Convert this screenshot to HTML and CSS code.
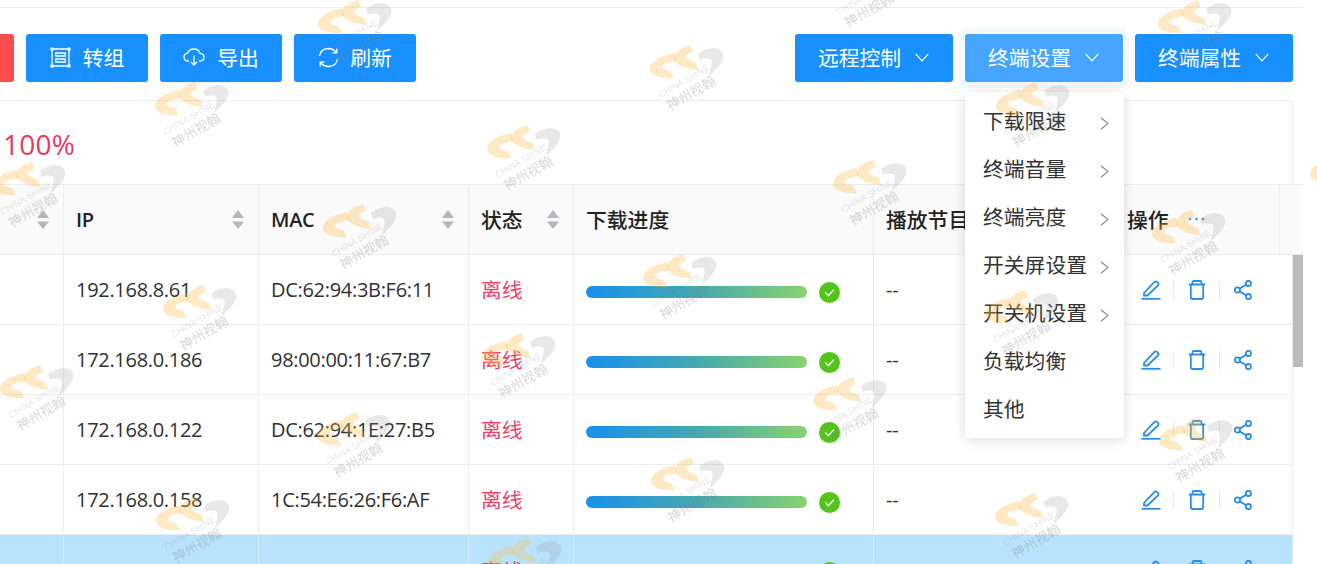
FILE: index.html
```html
<!DOCTYPE html>
<html lang="zh-CN">
<head>
<meta charset="utf-8">
<title>终端管理</title>
<link rel="stylesheet" href="styles.css">
</head>
<body>
<svg class="defs" width="0" height="0" aria-hidden="true">
  <defs>
    <symbol id="logo" viewBox="0 0 75 40">
      <path class="lg-o" d="M24 8C10 11 -1 17 0 25C1 31 13 34 24 33L20 26C15 25 12 24 12 22C12 19 19 17 26 16Z"/>
      <path class="lg-o" d="M40 0C31 2 23 8 24 14C25 20 37 24 48 25L46 18C41 16 36 14 36 12C36 10 39 8 43 7Z"/>
      <path class="lg-g" d="M48 9C56 3 65 1 70 5C77 10 73 19 59 31C60 24 63 18 61 15C59 13 54 13 50 15Z"/>
    </symbol>
    <symbol id="ic-edit" viewBox="0 0 20 20">
      <path d="M3 13.500L13.500 2.500Q14.700 1.400 16 2.400L17 3.400Q18 4.600 17 5.800L6.500 16H3Z" transform="translate(0 -.5)"/>
      <path d="M.5 18.800H19.500"/>
    </symbol>
    <symbol id="ic-trash" viewBox="0 0 18 20">
      <path d="M.8 4.500H17.200M4.500 4.500V2.400Q4.500 1 5.900 1H12.100Q13.500 1 13.500 2.400V4.500M2.800 4.500V17Q2.800 19 4.800 19H13.200Q15.200 19 15.200 17V4.500"/>
    </symbol>
    <symbol id="ic-share" viewBox="0 0 18 20">
      <circle cx="3.400" cy="10" r="2.600"/><circle cx="14.400" cy="3.400" r="2.600"/><circle cx="14.400" cy="16.600" r="2.600"/>
      <path d="M5.600 8.600L12.200 4.800M5.600 11.400L12.200 15.200"/>
    </symbol>
    <symbol id="ic-check" viewBox="0 0 21 21">
      <circle class="chk-bg" cx="10.500" cy="10.500" r="10.500"/>
      <path class="chk-mark" d="M6.300 10.600L9.400 13.700L14.800 7.600"/>
    </symbol>
    <symbol id="ic-down" viewBox="0 0 14 9"><path d="M.7 .8L7 7.800L13.300 .8"/></symbol>
    <symbol id="ic-right" viewBox="0 0 9 13"><path d="M1 .8L8 6.500L1 12.200"/></symbol>
    <symbol id="ic-caret" viewBox="0 0 12 19"><path d="M6 0L12 8H0Z"/><path d="M0 11.500H12L6 19Z"/></symbol>
  </defs>
</svg>

<div class="page">
  <div class="topline"></div>

  <div class="toolbar">
    <div class="btn-group">
      <button class="btn btn-red" aria-label="删除"></button>
      <button class="btn btn-wide">
        <svg class="btn-ic" width="21" height="21" viewBox="0 0 21 21"><path d="M2 2H19V19H2Z"/><path class="ic-dots" d="M.5 .5H3.500V3.500H.5ZM17.500 .5H20.500V3.500H17.500ZM.5 17.500H3.500V20.500H.5ZM17.500 17.500H20.500V20.500H17.500Z"/><path d="M5.800 6H15.200V9H5.800ZM5.800 12H15.200V15H5.800Z"/></svg>
        <span class="gap-l">转组</span>
      </button>
      <button class="btn btn-wide">
        <svg class="btn-ic" width="22" height="18" viewBox="0 0 22 18"><path d="M6 13H5Q1 13 1 9Q1 5.600 4.500 5.300Q6 1 11 1Q15.800 1 17 5.300Q21 5.800 21 9Q21 13 17 13H16M11 7.500V16.500M8 14L11 17L14 14"/></svg>
        <span class="gap-m">导出</span>
      </button>
      <button class="btn btn-wide">
        <svg class="btn-ic" width="21" height="21" viewBox="0 0 21 21"><path d="M1.500 9Q2.500 2 10 1.500Q15.500 1.500 18.500 5.500M19.500 12Q18.500 19 11 19.500Q5.500 19.500 2.500 15.500M18.800 1.500V5.800H14.500M2.200 19.500V15.200H6.500"/></svg>
        <span class="gap-s">刷新</span>
      </button>
    </div>
    <div class="btn-group">
      <button class="btn btn-drop"><span>远程控制</span><svg class="ic-down"><use href="#ic-down"/></svg></button>
      <button class="btn btn-drop is-active"><span>终端设置</span><svg class="ic-down"><use href="#ic-down"/></svg></button>
      <button class="btn btn-drop"><span>终端属性</span><svg class="ic-down"><use href="#ic-down"/></svg></button>
    </div>
  </div>

  <div class="card"><span class="percent">100%</span></div>

  <div class="thead">
    <div class="c c1 th"><svg class="caret"><use href="#ic-caret"/></svg></div>
    <div class="c c2 th"><span>IP</span><svg class="caret"><use href="#ic-caret"/></svg></div>
    <div class="c c3 th"><span>MAC</span><svg class="caret"><use href="#ic-caret"/></svg></div>
    <div class="c c4 th"><span class="zh">状态</span><svg class="caret"><use href="#ic-caret"/></svg></div>
    <div class="c c5 th"><span class="zh">下载进度</span></div>
    <div class="c c6 th"><span class="zh">播放节目单</span></div>
    <div class="c c7h th"><span class="zh">操作</span><svg class="more" width="17" height="4" viewBox="0 0 17 4"><circle cx="2" cy="2" r="1.300"/><circle cx="8.500" cy="2" r="1.300"/><circle cx="15" cy="2" r="1.300"/></svg></div>
    <div class="gutter"></div>
  </div>

  <div class="tbody-wrap">
    <div class="tbody">
      <div class="tr">
        <div class="c c1"></div>
        <div class="c c2">192.168.8.61</div>
        <div class="c c3">DC:62:94:3B:F6:11</div>
        <div class="c c4 zh status">离线</div>
        <div class="c c5"><div class="bar"></div><svg class="check"><use href="#ic-check"/></svg></div>
        <div class="c c6">--</div>
        <div class="c c7 ops"><svg class="op op-edit"><use href="#ic-edit"/></svg><i class="sep"></i><svg class="op op-trash"><use href="#ic-trash"/></svg><i class="sep"></i><svg class="op op-share"><use href="#ic-share"/></svg></div>
      </div>
      <div class="tr">
        <div class="c c1"></div>
        <div class="c c2">172.168.0.186</div>
        <div class="c c3">98:00:00:11:67:B7</div>
        <div class="c c4 zh status">离线</div>
        <div class="c c5"><div class="bar"></div><svg class="check"><use href="#ic-check"/></svg></div>
        <div class="c c6">--</div>
        <div class="c c7 ops"><svg class="op op-edit"><use href="#ic-edit"/></svg><i class="sep"></i><svg class="op op-trash"><use href="#ic-trash"/></svg><i class="sep"></i><svg class="op op-share"><use href="#ic-share"/></svg></div>
      </div>
      <div class="tr">
        <div class="c c1"></div>
        <div class="c c2">172.168.0.122</div>
        <div class="c c3">DC:62:94:1E:27:B5</div>
        <div class="c c4 zh status">离线</div>
        <div class="c c5"><div class="bar"></div><svg class="check"><use href="#ic-check"/></svg></div>
        <div class="c c6">--</div>
        <div class="c c7 ops"><svg class="op op-edit"><use href="#ic-edit"/></svg><i class="sep"></i><svg class="op op-trash"><use href="#ic-trash"/></svg><i class="sep"></i><svg class="op op-share"><use href="#ic-share"/></svg></div>
      </div>
      <div class="tr">
        <div class="c c1"></div>
        <div class="c c2">172.168.0.158</div>
        <div class="c c3">1C:54:E6:26:F6:AF</div>
        <div class="c c4 zh status">离线</div>
        <div class="c c5"><div class="bar"></div><svg class="check"><use href="#ic-check"/></svg></div>
        <div class="c c6">--</div>
        <div class="c c7 ops"><svg class="op op-edit"><use href="#ic-edit"/></svg><i class="sep"></i><svg class="op op-trash"><use href="#ic-trash"/></svg><i class="sep"></i><svg class="op op-share"><use href="#ic-share"/></svg></div>
      </div>
      <div class="tr is-selected">
        <div class="c c1"></div>
        <div class="c c2">10.101.84.54</div>
        <div class="c c3">AC:51:50:36:57:0E</div>
        <div class="c c4 zh status">离线</div>
        <div class="c c5"><div class="bar"></div><svg class="check"><use href="#ic-check"/></svg></div>
        <div class="c c6"></div>
        <div class="c c7 ops"><svg class="op op-edit"><use href="#ic-edit"/></svg><i class="sep"></i><svg class="op op-trash"><use href="#ic-trash"/></svg><i class="sep"></i><svg class="op op-share"><use href="#ic-share"/></svg></div>
      </div>
    </div>
    <div class="scrollbar"><div class="thumb"></div></div>
  </div>
</div>

<ul class="menu zh">
  <li>下载限速<svg class="ic-right"><use href="#ic-right"/></svg></li>
  <li>终端音量<svg class="ic-right"><use href="#ic-right"/></svg></li>
  <li>终端亮度<svg class="ic-right"><use href="#ic-right"/></svg></li>
  <li>开关屏设置<svg class="ic-right"><use href="#ic-right"/></svg></li>
  <li>开关机设置<svg class="ic-right"><use href="#ic-right"/></svg></li>
  <li>负载均衡</li>
  <li>其他</li>
</ul>

<div class="wms">
  <div class="wm w1"><svg class="wm-logo"><use href="#logo"/></svg><div class="wm-t"><span class="en">CHINA SHINE</span><span class="cn">神州视翰</span></div></div>
  <div class="wm w2"><svg class="wm-logo"><use href="#logo"/></svg><div class="wm-t"><span class="en">CHINA SHINE</span><span class="cn">神州视翰</span></div></div>
  <div class="wm w3"><svg class="wm-logo"><use href="#logo"/></svg><div class="wm-t"><span class="en">CHINA SHINE</span><span class="cn">神州视翰</span></div></div>
  <div class="wm w4"><svg class="wm-logo"><use href="#logo"/></svg><div class="wm-t"><span class="en">CHINA SHINE</span><span class="cn">神州视翰</span></div></div>
  <div class="wm w5"><svg class="wm-logo"><use href="#logo"/></svg><div class="wm-t"><span class="en">CHINA SHINE</span><span class="cn">神州视翰</span></div></div>
  <div class="wm w6"><svg class="wm-logo"><use href="#logo"/></svg><div class="wm-t"><span class="en">CHINA SHINE</span><span class="cn">神州视翰</span></div></div>
  <div class="wm w7"><svg class="wm-logo"><use href="#logo"/></svg><div class="wm-t"><span class="en">CHINA SHINE</span><span class="cn">神州视翰</span></div></div>
  <div class="wm w8"><svg class="wm-logo"><use href="#logo"/></svg><div class="wm-t"><span class="en">CHINA SHINE</span><span class="cn">神州视翰</span></div></div>
  <div class="wm w9"><svg class="wm-logo"><use href="#logo"/></svg><div class="wm-t"><span class="en">CHINA SHINE</span><span class="cn">神州视翰</span></div></div>
  <div class="wm w10"><svg class="wm-logo"><use href="#logo"/></svg><div class="wm-t"><span class="en">CHINA SHINE</span><span class="cn">神州视翰</span></div></div>
  <div class="wm w11"><svg class="wm-logo"><use href="#logo"/></svg><div class="wm-t"><span class="en">CHINA SHINE</span><span class="cn">神州视翰</span></div></div>
  <div class="wm w12"><svg class="wm-logo"><use href="#logo"/></svg><div class="wm-t"><span class="en">CHINA SHINE</span><span class="cn">神州视翰</span></div></div>
  <div class="wm w13"><svg class="wm-logo"><use href="#logo"/></svg><div class="wm-t"><span class="en">CHINA SHINE</span><span class="cn">神州视翰</span></div></div>
  <div class="wm w14"><svg class="wm-logo"><use href="#logo"/></svg><div class="wm-t"><span class="en">CHINA SHINE</span><span class="cn">神州视翰</span></div></div>
  <div class="wm w15"><svg class="wm-logo"><use href="#logo"/></svg><div class="wm-t"><span class="en">CHINA SHINE</span><span class="cn">神州视翰</span></div></div>
  <div class="wm w16"><svg class="wm-logo"><use href="#logo"/></svg><div class="wm-t"><span class="en">CHINA SHINE</span><span class="cn">神州视翰</span></div></div>
  <div class="wm w17"><svg class="wm-logo"><use href="#logo"/></svg><div class="wm-t"><span class="en">CHINA SHINE</span><span class="cn">神州视翰</span></div></div>
  <div class="wm w18"><svg class="wm-logo"><use href="#logo"/></svg><div class="wm-t"><span class="en">CHINA SHINE</span><span class="cn">神州视翰</span></div></div>
  <div class="wm w19"><svg class="wm-logo"><use href="#logo"/></svg><div class="wm-t"><span class="en">CHINA SHINE</span><span class="cn">神州视翰</span></div></div>
  <div class="wm w20"><svg class="wm-logo"><use href="#logo"/></svg><div class="wm-t"><span class="en">CHINA SHINE</span><span class="cn">神州视翰</span></div></div>
  <div class="wm w21"><svg class="wm-logo"><use href="#logo"/></svg><div class="wm-t"><span class="en">CHINA SHINE</span><span class="cn">神州视翰</span></div></div>
  <div class="wm w22"><svg class="wm-logo"><use href="#logo"/></svg><div class="wm-t"><span class="en">CHINA SHINE</span><span class="cn">神州视翰</span></div></div>
  <div class="wm w23"><svg class="wm-logo"><use href="#logo"/></svg><div class="wm-t"><span class="en">CHINA SHINE</span><span class="cn">神州视翰</span></div></div>
  <div class="wm w24"><svg class="wm-logo"><use href="#logo"/></svg><div class="wm-t"><span class="en">CHINA SHINE</span><span class="cn">神州视翰</span></div></div>
</div>
</body>
</html>
```
FILE: styles.css
```css
* { box-sizing: border-box; }
html, body { margin: 0; padding: 0; background: #fff; }
body {
  position: relative;
  width: 1317px;
  height: 564px;
  overflow: hidden;
  font-family: "Open Sans", "Noto Sans CJK SC", sans-serif;
  font-size: 20px;
  letter-spacing: -.3px;
  color: #303133;
}
.defs { position: absolute; }
.zh { font-family: "Noto Sans CJK SC", sans-serif; font-size: 20.800px; letter-spacing: 0; }

.page { width: 1303px; }
.topline { height: 8px; border-bottom: 1px solid #ededed; }

/* toolbar */
.toolbar {
  height: 92px;
  padding: 26px 10px 0 0;
  display: flex;
  justify-content: space-between;
  align-items: flex-start;
}
.btn-group { display: flex; gap: 12px; }
.btn {
  height: 48px;
  border: 0;
  padding: 0 0 2px;
  border-radius: 3px;
  background: #1890ff;
  color: #fff;
  font-family: "Noto Sans CJK SC", sans-serif;
  font-size: 20.800px;
  letter-spacing: 0;
  display: flex;
  align-items: center;
  justify-content: center;
  box-shadow: 0 2px 3px rgba(0, 0, 0, .05);
}
.btn-red { width: 14px; background: #ff4d4f; border-radius: 0 3px 3px 0; }
.btn-wide { width: 122px; }
.btn-drop { width: 158px; padding-right: 1px; }
.btn.is-active { background: #45a5ff; box-shadow: 0 0 0 6px rgba(24, 144, 255, .06); }
.btn-ic { fill: none; stroke: #fff; stroke-width: 1.300; flex: none; }
.ic-dots { fill: #fff; stroke: none; }
.gap-l { margin-left: 12px; }
.gap-m { margin-left: 12px; }
.gap-s { margin-left: 11px; }
.ic-down { width: 14px; height: 9px; margin-left: 14px; fill: none; stroke: #fff; stroke-width: 1.200; }

/* card title */
.card {
  width: 1293px;
  height: 84px;
  border: 1px solid #ededed;
  border-left: 0;
  border-bottom: 0;
  border-top-right-radius: 4px;
  display: flex;
  align-items: center;
  padding: 2px 0 0 3px;
}
.percent { font-size: 28px; line-height: 1; letter-spacing: .2px; color: #e8395f; }

/* table */
.thead {
  display: flex;
  height: 71px;
  background: #fafafa;
  border-top: 1px solid #ededed;
  border-bottom: 1px solid #ededed;
  color: #222;
}
.tr { display: flex; height: 70px; border-bottom: 1px solid #ededed; background: #fff; flex: none; }
.c {
  display: flex;
  align-items: center;
  padding: 0 14px 0 12px;
  border-right: 1px solid #ededed;
  flex: none;
  white-space: nowrap;
  overflow: hidden;
}
.c1 { width: 64px; }
.c2 { width: 195px; }
.c3 { width: 210px; }
.c4 { width: 105px; }
.c5 { width: 300px; padding-top: 5px; }
.c6 { width: 240px; }
.c7 { width: 179px; }
.c7h { width: 166px; }
.tr .c6 { border-right-color: transparent; }
.gutter { flex: 1; }
.th { justify-content: space-between; font-weight: 600; padding-bottom: 1px; }
.th .zh { font-weight: 500; }
.c5.th { padding-top: 0; }
.c7h { justify-content: flex-start; padding-left: 13px; }
.caret { width: 12px; height: 19px; fill: #b4b6b9; flex: none; margin-left: auto; }
.more { fill: #3d97ea; margin-left: 19px; flex: none; }

.tbody-wrap { display: flex; height: 310px; overflow: hidden; }
.tbody { width: 1293px; flex: none; }
.status { color: #e8416c; padding-bottom: 1px; }
.bar {
  width: 221px;
  height: 12px;
  border-radius: 6px;
  background: linear-gradient(90deg, #1890ee 0%, #45a8b0 50%, #88d26e 100%);
  flex: none;
}
.check { width: 21px; height: 21px; margin-left: 12px; flex: none; }
.chk-bg { fill: #52c41a; }
.chk-mark { fill: none; stroke: #fff; stroke-width: 1.400; }
.ops { padding-left: 27px; }
.op { fill: none; stroke: #2b8de6; stroke-width: 1.800; flex: none; }
.op-edit { width: 20px; height: 20px; }
.op-trash { width: 20px; height: 20px; }
.op-share { width: 18px; height: 20px; margin-left: 1px; }
.sep { width: 1px; height: 18px; background: #e8e8e8; margin: 0 13px 0 12px; flex: none; }
.tr.is-selected { background: #b9e3fd; border-bottom: 0; }
.is-selected .c { border-right-color: #d6effe; }
.tr.is-selected .c6 { border-right-color: transparent; }
.scrollbar { width: 10px; flex: none; }
.thumb { width: 10px; height: 112px; background: #bbb; }

/* dropdown */
.menu {
  position: absolute;
  left: 965px;
  top: 92px;
  width: 159px;
  height: 346px;
  margin: 0;
  padding: 6px 0 0;
  list-style: none;
  background: #fff;
  border-radius: 4px;
  box-shadow: 0 2px 14px rgba(0, 0, 0, .14);
  color: #333;
}
.menu li {
  height: 48px;
  padding: 0 0 4px 18px;
  display: flex;
  align-items: center;
  white-space: nowrap;
  position: relative;
}
.ic-right {
  position: absolute;
  left: 135px;
  top: 19px;
  width: 9px;
  height: 13px;
  fill: none;
  stroke: #888;
  stroke-width: 1.100;
}

/* watermark overlay */
.wms { position: absolute; inset: 0; pointer-events: none; overflow: hidden; }
.wm { position: absolute; width: 75px; height: 70px; }
.wm-logo { display: block; width: 75px; height: 40px; overflow: visible; }
.lg-o { fill: rgba(250, 190, 70, .32); }
.lg-g { fill: rgba(140, 140, 140, .2); }
.wm-t {
  position: absolute;
  left: -2px;
  top: 31px;
  width: 80px;
  display: flex;
  flex-direction: column;
  align-items: center;
  transform: rotate(-30deg);
  color: rgba(120, 120, 120, .3);
  line-height: 1;
  letter-spacing: 0;
}
.wm-t .en { font-family: "Liberation Sans", sans-serif; font-size: 9px; font-weight: 400; white-space: nowrap; color: rgba(120, 120, 120, .2); }
.wm-t .cn { font-family: "Noto Sans CJK SC", sans-serif; font-size: 13.500px; margin-top: 2px; white-space: nowrap; }

.w1 { left: 318px; top: 0; }
.w2 { left: 828px; top: -38px; }
.w3 { left: 1158px; top: 0; }
.w4 { left: 650px; top: 45px; }
.w5 { left: 155px; top: 82px; }
.w6 { left: 487px; top: 125px; }
.w7 { left: 833px; top: 160px; }
.w8 { left: -8px; top: 162px; }
.w9 { left: 1310px; top: 150px; }
.w10 { left: 323px; top: 204px; }
.w11 { left: 1152px; top: 210px; }
.w12 { left: 643px; top: 254px; }
.w13 { left: 163px; top: 285px; }
.w14 { left: 482px; top: 333px; }
.w15 { left: 985px; top: 290px; }
.w16 { left: 0; top: 365px; }
.w17 { left: 813px; top: 377px; }
.w18 { left: 317px; top: 412px; }
.w19 { left: 1159px; top: 417px; }
.w20 { left: 651px; top: 457px; }
.w21 { left: 156px; top: 497px; }
.w22 { left: 995px; top: 493px; }
.w23 { left: 488px; top: 538px; }
.w24 { left: 996px; top: 82px; }
```
